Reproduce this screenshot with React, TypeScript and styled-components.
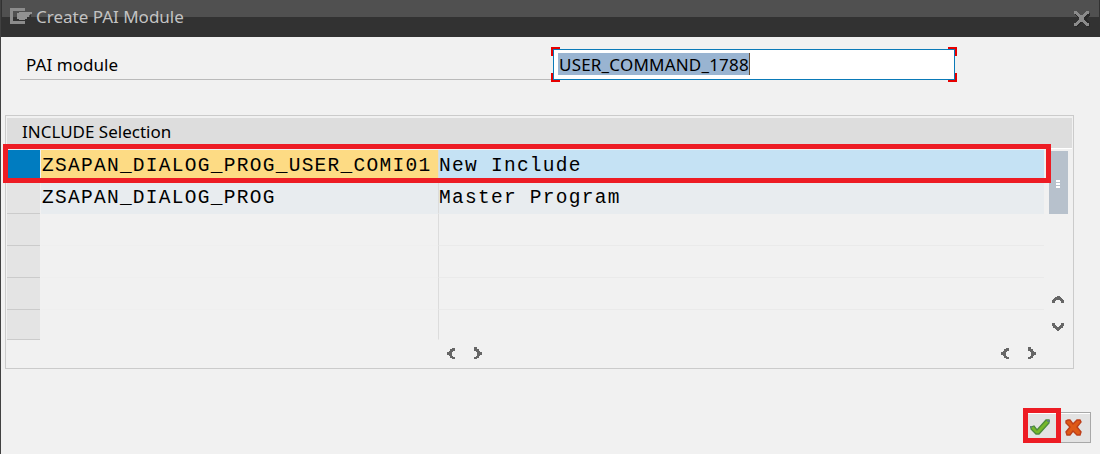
import React from 'react';
import styled, { createGlobalStyle } from 'styled-components';

const Global = createGlobalStyle`
  * { box-sizing: border-box; }
  body { margin: 0; background: #f1f1f1; }
`;

const Dialog = styled.div`
  position: relative;
  width: 1100px;
  height: 454px;
  overflow: hidden;
  background: #f1f1f1;
  border-left: 1px solid #414141;
  color: #000;
  font-family: 'Noto Sans', sans-serif;
  font-size: 17px;
`;

const TitleBar = styled.header`
  display: flex;
  height: 37px;
  border-left: 1px solid #323232;
  border-right: 1px solid #323232;
  background: linear-gradient(#505050 0 17px, #323232 17px);
  padding: 0 8px 0 8px;
`;

const Title = styled.span`
  flex: 1;
  margin-left: 4px;
  line-height: 34px;
  color: #c3c3c3;
`;

const FieldRow = styled.div`
  display: flex;
  height: 35px;
  margin: 10px 0 0 19px;
`;

const Label = styled.label`
  width: 531px;
  height: 33px;
  padding-left: 6px;
  line-height: 35px;
  letter-spacing: 0.05px;
  border-bottom: 1px solid #bababa;
`;

const FieldFrame = styled.div`
  width: 406px;
  height: 35px;
  padding: 2px;
  --h: linear-gradient(#e60000, #e60000);
  background:
    var(--h) 0 0 / 9px 9px no-repeat,
    var(--h) 100% 0 / 9px 9px no-repeat,
    var(--h) 0 100% / 9px 9px no-repeat,
    var(--h) 100% 100% / 9px 9px no-repeat;
`;

const Field = styled.div`
  height: 31px;
  border: 1px solid #0a7ab8;
  background: #fff;
  padding: 3px 0 0 4px;
`;

const Selected = styled.span`
  display: block;
  width: 192px;
  height: 22px;
  padding-left: 1px;
  line-height: 23px;
  white-space: nowrap;
  letter-spacing: 0.2px;
  background: #99b4d1;
  border-right: 1px solid #664b2e;
`;

const Table = styled.section`
  width: 1069px;
  height: 254px;
  margin: 33px 0 0 4px;
  padding: 2px 1px 0;
  border: 1px solid #cbcbcb;
`;

const TableHead = styled.div`
  height: 31px;
  padding-left: 15px;
  line-height: 28px;
  background: #ddd;
  border-bottom: 1px solid #fff;
`;

const TableBody = styled.div`
  display: flex;
  margin-top: 1px;
`;

const Rows = styled.div`
  width: 1037px;
`;

const Row = styled.div<{ $last?: boolean }>`
  display: flex;
  height: ${(p) => (p.$last ? 30 : 32)}px;
`;

type Tone = 'selected' | 'filled' | 'empty';

const Marker = styled.div<{ $tone: Tone }>`
  width: 33px;
  background: ${(p) => (p.$tone === 'selected' ? '#007cc0' : '#e4e4e4')};
  border-bottom: 1px solid #cbcbcb;
`;

const nameBg = { selected: '#fddb84', filled: '#e8ecef', empty: '#f1f1f1' };
const textBg = { selected: '#c5e2f4', filled: '#e8ecef', empty: '#f1f1f1' };

const Cell = styled.div<{ $tone: Tone; $line: string }>`
  white-space: pre;
  font-family: 'Liberation Mono', monospace;
  font-size: 19.5px;
  letter-spacing: 1.28px;
  line-height: 33px;
  border-bottom: 1px solid ${(p) => p.$line};
`;

const NameCell = styled(Cell)`
  width: 397px;
  margin-left: 1px;
  padding-left: 1px;
  background: ${(p) => nameBg[p.$tone]};
`;

const TextCell = styled(Cell)`
  flex: 1;
  border-left: 1px solid #dcdcdc;
  background: ${(p) => textBg[p.$tone]};
`;

const ScrollColumn = styled.div`
  display: flex;
  flex-direction: column;
  width: 19px;
  margin-left: 5px;
  padding-top: 1px;
`;

const Thumb = styled.div`
  display: flex;
  flex-direction: column;
  gap: 1px;
  width: 19px;
  height: 63px;
  padding: 29px 0 0 7px;
  background: #b7c1cc;
`;

const Grip = styled.i`
  width: 4px;
  height: 2px;
  background: #fff;
`;

const UpDown = styled.div`
  display: flex;
  flex-direction: column;
  gap: 20px;
  margin: 82px 0 0 3px;
`;

const Pager = styled.div`
  display: flex;
  align-items: flex-start;
  justify-content: space-between;
  margin: 7px 36px 0 440px;
`;

const Pair = styled.div`
  display: flex;
  gap: 19px;
`;

const Actions = styled.footer`
  display: flex;
  justify-content: flex-end;
  margin: 43px 9px 0 0;
`;

const ActionButton = styled.button`
  display: flex;
  align-items: center;
  justify-content: center;
  width: 34px;
  height: 31px;
  margin: 0;
  padding: 0;
  border: 1px solid #a8a8a8;
  border-left: 0;
  box-shadow: inset 0 1px #fff;
  background: #e3e3e3;
`;

const Highlight = styled.div<{ $x: number; $y: number; $w: number; $h: number }>`
  position: absolute;
  left: ${(p) => p.$x}px;
  top: ${(p) => p.$y}px;
  width: ${(p) => p.$w}px;
  height: ${(p) => p.$h}px;
  border: 5px solid #ed1c24;
`;

const Svg = styled.svg`
  display: block;
  flex: none;
`;

const chevrons = {
  up: { w: 12, h: 7, d: 'M5 0h3v1h1v1h1v1h1v1h1v3H9V5H8V4H4v1H3v2H0V4h1V3h1V2h1V1h2z' },
  down: { w: 12, h: 8, d: 'M0 0h3v2h1v1h1v1h2V3h1V2h1V0h3v3h-1v2h-2v1H8v1H7v1H5V7H4V6H3V5H1V3H0z' },
  left: { w: 8, h: 12, d: 'M5 1h3v3H6v1H5v4h1v1h2v2H5v-1H3V9H2V8H0V5h2V4h1V2h2z' },
  right: { w: 8, h: 12, d: 'M0 0h3v2h2v2h1v1h2v3H6v1H5v2H3v1H0v-2h2V9h1V5H2V4H0z' },
};

const Chevron = ({ dir }: { dir: keyof typeof chevrons }) => {
  const c = chevrons[dir];
  return (
    <Svg width={c.w} height={c.h} shapeRendering="crispEdges">
      <path d={c.d} fill="#666" />
    </Svg>
  );
};

const WindowIcon = () => (
  <Svg width="22" height="37" shapeRendering="crispEdges">
    <path d="M0 8h15v3H3v10h12v3H0z" fill="#8c8c8c" />
    <path d="M9 12h13v2h-2v1h-1v2h-2v2h-2v1H9v-1H7v-6h2z" fill="#929292" />
    <path d="M19 17h1v-2h1v2h-1v1h-1v1h-2v1h-2v-1h2v-2z" fill="#303030" />
  </Svg>
);

const CloseIcon = () => (
  <Svg width="17" height="37" shapeRendering="crispEdges">
    <path d="M1 13l2 0 5 5 5-5h3v2l-4 4 4 4v4h-3l-5-5-5 5H1v-3l4-5-4-4z" fill="#292929" />
    <path d="M0 11h3v1h1v1h1v1h1v1h3v-1h1v-1h1v-1h1v-1h3v3h-2v1h-1v1h-1v1h-1v3h1v1h1v1h1v1h2v3h-3v-1h-1v-1h-1v-1H9v-1H6v1H5v1H4v1H3v1H0v-3h2v-1h1v-1h1v-1h1v-3H4v-1H3v-1H2v-1H0z" fill="#8b8b8b" />
  </Svg>
);

const CheckIcon = () => (
  <Svg width="20" height="17" viewBox="0 0 20 17">
    <path d="M1 8l3-1 3 4L16 1h3v3L9 15H6L1 10z" fill="#76b82a" stroke="#4c8a3d" strokeWidth="1.3" />
    <path d="M0 7h2v2H0zM17 1h3v2h-3z" fill="#5f8577" />
  </Svg>
);

const CrossIcon = () => (
  <Svg width="17" height="17" viewBox="0 0 17 17">
    <path d="M1 2l2-1h2l3 4 4-4h3l1 2-4 5 4 5-1 3h-3l-4-4-3 4H2l-1-3 4-5-4-4z" fill="#de5a17" stroke="#bd3e19" strokeWidth="1.4" />
  </Svg>
);

const rows: { tone: Tone; name: string; text: string }[] = [
  { tone: 'selected', name: 'ZSAPAN_DIALOG_PROG_USER_COMI01', text: 'New Include' },
  { tone: 'filled', name: 'ZSAPAN_DIALOG_PROG', text: 'Master Program' },
  { tone: 'empty', name: '', text: '' },
  { tone: 'empty', name: '', text: '' },
  { tone: 'empty', name: '', text: '' },
  { tone: 'empty', name: '', text: '' },
];

export default function App() {
  return (
    <>
      <Global />
      <Dialog>
        <TitleBar>
          <WindowIcon />
          <Title>Create PAI Module</Title>
          <CloseIcon />
        </TitleBar>
        <FieldRow>
          <Label>PAI module</Label>
          <FieldFrame>
            <Field>
              <Selected>USER_COMMAND_1788</Selected>
            </Field>
          </FieldFrame>
        </FieldRow>
        <Table>
          <TableHead>INCLUDE Selection</TableHead>
          <TableBody>
            <Rows>
              {rows.map((r, i) => {
                const last = i === rows.length - 1;
                const line = r.tone === 'empty' && !last;
                return (
                  <Row key={i} $last={last}>
                    <Marker $tone={r.tone} />
                    <NameCell $tone={r.tone} $line={line ? '#efefef' : 'transparent'}>{r.name}</NameCell>
                    <TextCell $tone={r.tone} $line={line ? '#eaeaea' : 'transparent'}>{r.text}</TextCell>
                  </Row>
                );
              })}
            </Rows>
            <ScrollColumn>
              <Thumb>
                <Grip />
                <Grip />
                <Grip />
              </Thumb>
              <UpDown>
                <Chevron dir="up" />
                <Chevron dir="down" />
              </UpDown>
            </ScrollColumn>
          </TableBody>
          <Pager>
            <Pair>
              <Chevron dir="left" />
              <Chevron dir="right" />
            </Pair>
            <Pair>
              <Chevron dir="left" />
              <Chevron dir="right" />
            </Pair>
          </Pager>
        </Table>
        <Actions>
          <ActionButton aria-label="Continue">
            <CheckIcon />
          </ActionButton>
          <ActionButton aria-label="Cancel">
            <CrossIcon />
          </ActionButton>
        </Actions>
        <Highlight $x={2} $y={144} $w={1048} $h={39} />
        <Highlight $x={1022} $y={408} $w={38} $h={35} />
      </Dialog>
    </>
  );
}
